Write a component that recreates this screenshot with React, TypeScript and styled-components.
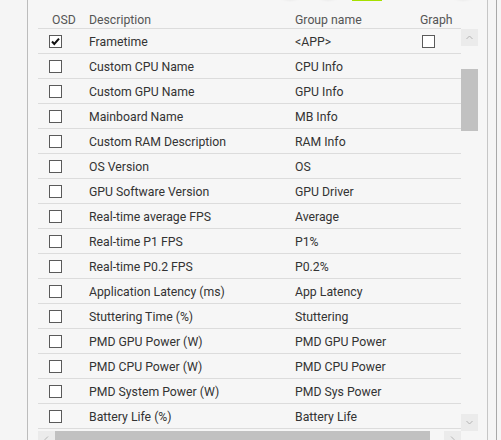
import React from 'react';
import styled, { createGlobalStyle } from 'styled-components';

type Item = {
  label: string;
  group: string;
  osd?: boolean;
  graph?: boolean;
};

const items: Item[] = [
  { label: 'Frametime', group: '<APP>', osd: true, graph: true },
  { label: 'Custom CPU Name', group: 'CPU Info' },
  { label: 'Custom GPU Name', group: 'GPU Info' },
  { label: 'Mainboard Name', group: 'MB Info' },
  { label: 'Custom RAM Description', group: 'RAM Info' },
  { label: 'OS Version', group: 'OS' },
  { label: 'GPU Software Version', group: 'GPU Driver' },
  { label: 'Real-time average FPS', group: 'Average' },
  { label: 'Real-time P1 FPS', group: 'P1%' },
  { label: 'Real-time P0.2 FPS', group: 'P0.2%' },
  { label: 'Application Latency (ms)', group: 'App Latency' },
  { label: 'Stuttering Time (%)', group: 'Stuttering' },
  { label: 'PMD GPU Power (W)', group: 'PMD GPU Power' },
  { label: 'PMD CPU Power (W)', group: 'PMD CPU Power' },
  { label: 'PMD System Power (W)', group: 'PMD Sys Power' },
  { label: 'Battery Life (%)', group: 'Battery Life' },
];

const GlobalStyle = createGlobalStyle`
  html, body {
    margin: 0;
    height: 100%;
    overflow: hidden;
    background: #f5f5f5;
    font-family: Roboto, "Liberation Sans", sans-serif;
  }
`;

const Checkbox: React.FC<{ checked?: boolean }> = ({ checked }) => (
  <Box>
    {checked && (
      <svg width="11" height="11" viewBox="0 0 11 11">
        <path d="M2 5.5 L4.3 8 L9 2.6" fill="none" stroke="#111" strokeWidth="2" />
      </svg>
    )}
  </Box>
);

const Arrow: React.FC<{ dir: 'up' | 'down' | 'left' | 'right' }> = ({ dir }) => {
  const rot = { up: 0, right: 90, down: 180, left: 270 }[dir];
  return (
    <svg width="9" height="9" viewBox="0 0 9 9" style={{ transform: `rotate(${rot}deg)` }}>
      <path d="M1.5 6 L4.5 3 L7.5 6" fill="none" stroke="#b4b4b4" strokeWidth="1" />
    </svg>
  );
};

const App: React.FC = () => {
  return (
    <>
      <GlobalStyle />
      <Page>
        <Panel>
          <Toolbar>
            <RoundButton $offset={237} />
            <RoundButton $offset={8} />
            <ActiveTab />
            <RoundButton $offset={66} />
          </Toolbar>
          <HeaderRow>
            <HeadCell $pad={14}>OSD</HeadCell>
            <HeadCell>Description</HeadCell>
            <HeadCell>Group name</HeadCell>
            <HeadCell>Graph</HeadCell>
          </HeaderRow>
          <ScrollArea>
            <Rows>
              {items.map((it) => (
                <Row key={it.label}>
                  <Cell $pad={11}>
                    <Checkbox checked={it.osd} />
                  </Cell>
                  <Cell>{it.label}</Cell>
                  <Cell>{it.group}</Cell>
                  <Cell $pad={2}>{it.graph && <Checkbox />}</Cell>
                </Row>
              ))}
            </Rows>
            <VBar>
              <ScrollButton>
                <Arrow dir="up" />
              </ScrollButton>
              <VTrack>
                <VThumb />
              </VTrack>
              <ScrollButton>
                <Arrow dir="down" />
              </ScrollButton>
            </VBar>
            <HBar>
              <ScrollButton>
                <Arrow dir="left" />
              </ScrollButton>
              <HTrack>
                <HThumb />
              </HTrack>
              <ScrollButton>
                <Arrow dir="right" />
              </ScrollButton>
            </HBar>
          </ScrollArea>
        </Panel>
      </Page>
    </>
  );
};

const Page = styled.div`
  width: 497px;
  height: 460px;
  padding-left: 27px;
  box-sizing: border-box;
  border-right: 1px solid #a8a8a8;
  display: flex;
`;

const Panel = styled.div`
  width: 461px;
  box-sizing: border-box;
  border-left: 1px solid #bcbcbc;
  border-right: 1px solid #c6c6c6;
  padding: 0 9px 0 10px;
  background: #f6f6f6;
`;

const Toolbar = styled.div`
  display: flex;
  align-items: flex-start;
  height: 10px;
`;

const RoundButton = styled.div<{ $offset: number }>`
  flex-shrink: 0;
  width: 30px;
  height: 30px;
  margin-top: -33px;
  margin-left: ${(p) => p.$offset}px;
  border-radius: 50%;
  background: #f6f6f6;
  box-shadow: 0 1px 4px rgba(0, 0, 0, 0.28);
`;

const ActiveTab = styled.div`
  flex-shrink: 0;
  width: 30px;
  height: 1px;
  margin-left: 9px;
  background: #a6e000;
`;

const HeaderRow = styled.div`
  display: grid;
  grid-template-columns: 51px 206px 125px 41px;
  width: 423px;
  height: 18px;
  border-bottom: 1px solid #dcdcdc;
`;

const HeadCell = styled.div<{ $pad?: number }>`
  padding-left: ${(p) => p.$pad ?? 0}px;
  padding-top: 1px;
  font-size: 12.25px;
  line-height: 18px;
  color: #555;
  white-space: nowrap;
`;

const ScrollArea = styled.div`
  display: grid;
  grid-template-columns: 423px 17px;
  grid-template-rows: 402px 17px;
`;

const Rows = styled.div`
  overflow: hidden;
`;

const Row = styled.div`
  display: grid;
  grid-template-columns: 51px 206px 125px 41px;
  height: 24px;
  border-bottom: 1px solid #dcdcdc;
`;

const Cell = styled.div<{ $pad?: number }>`
  display: flex;
  align-items: center;
  padding-left: ${(p) => p.$pad ?? 0}px;
  padding-top: 1px;
  font-size: 12.25px;
  color: #333;
  white-space: nowrap;
`;

const Box = styled.div`
  width: 11px;
  height: 11px;
  border: 1px solid #5a5a5a;
  background: #fff;
  display: flex;
  align-items: center;
  justify-content: center;
`;

const VBar = styled.div`
  display: flex;
  flex-direction: column;
`;

const HBar = styled.div`
  display: flex;
`;

const ScrollButton = styled.div`
  flex-shrink: 0;
  width: 17px;
  height: 17px;
  background: #ebebeb;
  display: flex;
  align-items: center;
  justify-content: center;
`;

const VTrack = styled.div`
  flex: 1;
  padding-top: 23px;
`;

const VThumb = styled.div`
  height: 62px;
  background: #c1c1c1;
`;

const HTrack = styled.div`
  flex: 1;
`;

const HThumb = styled.div`
  width: 375px;
  height: 17px;
  background: #c1c1c1;
`;

export default App;
